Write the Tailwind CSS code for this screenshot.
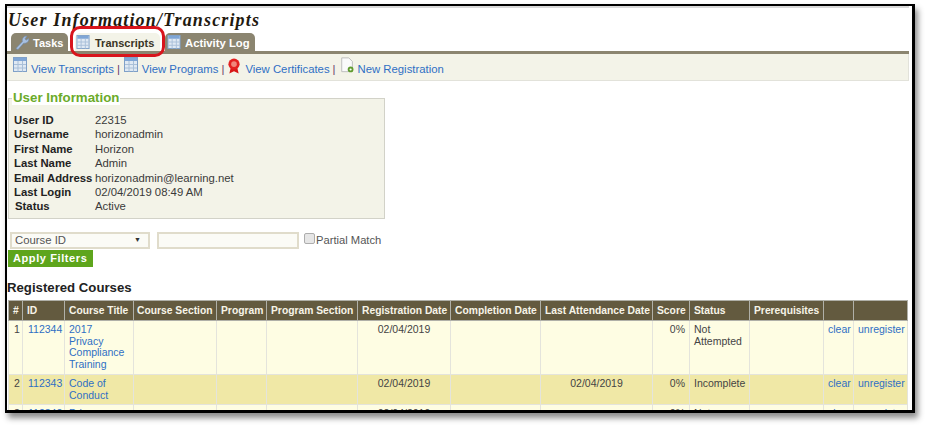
<!DOCTYPE html>
<html>
<head>
<meta charset="utf-8">
<script src="https://cdn.jsdelivr.net/npm/@tailwindcss/browser@4"></script>
</head>
<body class="bg-white">
<svg width="0" height="0" class="absolute">
  <defs>
    <symbol id="tbl" viewBox="0 0 14 15">
      <rect x=".5" y=".5" width="13" height="14" fill="#dfe9f3" stroke="#7fa0c8"/>
      <rect x="1" y="1" width="12" height="3" fill="#7fa6d6"/>
      <path d="M1 7.500h12M1 11h12M5 4v10.500M9.500 4v10.500" stroke="#a9c0d8" stroke-width="1" fill="none"/>
    </symbol>
  </defs>
</svg>
<div class="w-[926px] h-[426px] overflow-hidden pt-[4px] pl-[5px] font-['Liberation_Sans',Arial,sans-serif]">
  <div class="relative w-[910px] h-[409px] border-t-2 border-l-2 border-r-[3px] border-b-[3px] border-black overflow-hidden bg-white shadow-[3px_5px_6px_rgba(0,0,0,0.45)]">
    <div class="h-[2px] bg-[#d9d9d9] mr-[3px]"></div>

    <h1 class="ml-[1px] mt-[2px] h-[22px] leading-[20px] text-[18px] italic font-bold tracking-[1.15px] text-[#1f1a10] font-['Liberation_Serif',serif]">User Information/Transcripts</h1>

    <div class="flex items-end h-[19px] ml-[4px]">
      <div class="flex items-center gap-[3px] h-[18px] w-[57px] pl-[3px] rounded-t-[5px] bg-[#8b8570] text-white text-[11px] font-bold">
        <svg width="16" height="16" viewBox="0 0 15 16"><path d="M1.500 14.500 8 7.500C7.300 5 9 2 12.500 2L10.500 4.800 11.500 6.300 14.200 4.500C14.500 8 11.500 9.800 9.300 9L3.500 15.500Z" fill="#a9c1e0" stroke="#6d8db8" stroke-width=".6"/></svg>
        <span class="pt-[3px]">Tasks</span>
      </div>
      <div class="flex items-center gap-[5px] h-[18px] w-[85px] ml-[7px] pl-[1px] rounded-t-[5px] bg-[#f3f3e8] text-[#3a3526] text-[11px] font-bold">
        <svg width="14" height="14"><use href="#tbl"/></svg>
        <span class="pt-[3px]">Transcripts</span>
      </div>
      <div class="flex items-center gap-[4px] h-[18px] w-[90px] ml-[5px] pl-[2px] rounded-t-[5px] bg-[#8b8570] text-white text-[11.3px] font-bold">
        <svg width="14" height="14"><use href="#tbl"/></svg>
        <span class="pt-[3px]">Activity Log</span>
      </div>
    </div>

    <div class="h-[3px] bg-[#8b8570] mr-[3px]"></div>
    <div class="flex items-center h-[27px] mr-[3px] pl-[6px] bg-[#f3f3e8] border-b border-r border-[#e2e2da] text-[11.33px] text-[#2f6fc4] pt-[4px]">
      <svg width="14" height="15" class="mb-[10px]"><use href="#tbl"/></svg>
      <span class="ml-[4px]">View Transcripts</span>
      <span class="mx-[3px] text-[#6b3d6b]">|</span>
      <svg width="14" height="15" class="mb-[10px] ml-[1px]"><use href="#tbl"/></svg>
      <span class="ml-[4px]">View Programs</span>
      <span class="mx-[3px] text-[#6b3d6b]">|</span>
      <svg width="14" height="18" viewBox="0 0 15 18" class="mb-[6px]"><path d="M4 11 2.500 17 7.500 14.500 12.500 17 11 11Z" fill="#d81818"/><circle cx="7.500" cy="7" r="6" fill="#e32020"/><circle cx="7.500" cy="7" r="3" fill="#f0877c"/></svg>
      <span class="ml-[4px]">View Certificates</span>
      <span class="ml-[3px] mr-[4px] text-[#6b3d6b]">|</span>
      <svg width="15" height="16" viewBox="0 0 16 18" class="mb-[8px]"><path d="M1.500 1h8l4 4v8H9v3.500H1.500Z" fill="#fafafa" stroke="#b8b8b8"/><circle cx="11.500" cy="14" r="3.200" fill="#5f9a2e"/><circle cx="11.500" cy="14" r="1.200" fill="#fff"/></svg>
      <span class="ml-[3px]">New Registration</span>
    </div>

    <fieldset class="relative ml-[1px] mt-[17px] w-[377px] h-[121px] bg-[#f3f3e8] border border-[#d2d2c8]">
      <span class="absolute left-[3px] -top-[9px] px-[1px] text-[13.3px] leading-[15px] font-bold text-[#6bab2a] bg-white">User Information</span>
      <div class="grid grid-cols-[81px_1fr] pt-[14px] pl-[5px] text-[11.33px] leading-[14.4px] text-[#3a3a3a]">
        <b class="text-[#222]">User ID</b><span>22315</span>
        <b class="text-[#222]">Username</b><span>horizonadmin</span>
        <b class="text-[#222]">First Name</b><span>Horizon</span>
        <b class="text-[#222]">Last Name</b><span>Admin</span>
        <b class="text-[#222] whitespace-nowrap">Email Address</b><span>horizonadmin@learning.net</span>
        <b class="text-[#222]">Last Login</b><span>02/04/2019 08:49 AM</span>
        <b class="text-[#222] pl-[1px]">Status</b><span>Active</span>
      </div>
    </fieldset>

    <div class="flex items-center h-[19px] ml-[3px] mt-[12px] text-[#444]">
      <div class="flex items-center justify-between w-[140px] h-[17px] px-[3px] bg-[#fbfbf6] border-2 border-[#e0dccb]">
        <span class="text-[11.33px] text-[#555]">Course ID</span>
        <span class="text-[7px] text-[#333] mr-[4px]">▼</span>
      </div>
      <div class="ml-[7px] w-[142px] h-[17px] bg-[#fbfbf6] border-2 border-[#e0dccb]"></div>
      <div class="ml-[5px] mb-[5px] w-[11px] h-[11px] rounded-[2px] bg-[#e6e6e6] border border-[#adadad]"></div>
      <span class="ml-[1px] text-[11.2px] text-[#555]">Partial Match</span>
    </div>

    <div class="flex items-center ml-[1px] mt-0 w-[85px] h-[17px] pl-[5px] bg-[#5ea51c] text-white text-[11px] font-bold tracking-[0.6px]">Apply Filters</div>

    <h2 class="ml-[0px] mt-[12px] h-[18px] leading-[18px] text-[13.2px] font-bold text-[#222]">Registered Courses</h2>

    <table class="ml-[1px] mt-[3px] table-fixed border-collapse w-[899px] text-[10.5px] leading-[11.5px] text-[#444]">
      <colgroup>
        <col class="w-[14px]"><col class="w-[42px]"><col class="w-[69px]"><col class="w-[83px]"><col class="w-[50px]"><col class="w-[91px]"><col class="w-[93px]"><col class="w-[90px]"><col class="w-[112px]"><col class="w-[37px]"><col class="w-[60px]"><col class="w-[74px]"><col class="w-[30px]"><col class="w-[54px]">
      </colgroup>
      <thead>
        <tr class="h-[20px] bg-[#635a3f] text-[#f7f4e8] text-[10.3px] font-bold whitespace-nowrap text-left">
          <th class="border border-[#b0b0a8] pl-[4px]">#</th>
          <th class="border border-[#b0b0a8] pl-[4px]">ID</th>
          <th class="border border-[#b0b0a8] pl-[4px]">Course Title</th>
          <th class="border border-[#b0b0a8] pl-[3px]">Course Section</th>
          <th class="border border-[#b0b0a8] pl-[4px]">Program</th>
          <th class="border border-[#b0b0a8] pl-[4px]">Program Section</th>
          <th class="border border-[#b0b0a8] pl-[4px]">Registration Date</th>
          <th class="border border-[#b0b0a8] pl-[4px]">Completion Date</th>
          <th class="border border-[#b0b0a8] pl-[4px]">Last Attendance Date</th>
          <th class="border border-[#b0b0a8] pl-[4px]">Score</th>
          <th class="border border-[#b0b0a8] pl-[4px]">Status</th>
          <th class="border border-[#b0b0a8] pl-[4px]">Prerequisites</th>
          <th class="border border-[#b0b0a8]"></th>
          <th class="border border-[#b0b0a8]"></th>
        </tr>
      </thead>
      <tbody>
        <tr class="h-[54px] bg-[#fefde3] align-top">
          <td class="border border-[#e4e4dc] pl-[5px] pt-[3px]">1</td>
          <td class="border border-[#e4e4dc] pl-[5px] pt-[3px] text-[#2f6fc4]">112344</td>
          <td class="border border-[#e4e4dc] pl-[4px] pt-[3px] text-[#2f6fc4]">2017<br>Privacy Compliance Training</td>
          <td class="border border-[#e4e4dc]"></td>
          <td class="border border-[#e4e4dc]"></td>
          <td class="border border-[#e4e4dc]"></td>
          <td class="border border-[#e4e4dc] pt-[3px] text-center">02/04/2019</td>
          <td class="border border-[#e4e4dc]"></td>
          <td class="border border-[#e4e4dc]"></td>
          <td class="border border-[#e4e4dc] pt-[3px] pr-[4px] text-right">0%</td>
          <td class="border border-[#e4e4dc] pl-[4px] pt-[3px]">Not Attempted</td>
          <td class="border border-[#e4e4dc]"></td>
          <td class="border border-[#e4e4dc] pl-[4px] pt-[3px] text-[#2f6fc4]">clear</td>
          <td class="border border-[#e4e4dc] pl-[4px] pt-[3px] text-[#2f6fc4]">unregister</td>
        </tr>
        <tr class="h-[30px] bg-[#f0e8a6] align-top">
          <td class="border border-[#e4e4dc] pl-[5px] pt-[3px]">2</td>
          <td class="border border-[#e4e4dc] pl-[5px] pt-[3px] text-[#2f6fc4]">112343</td>
          <td class="border border-[#e4e4dc] pl-[4px] pt-[3px] text-[#2f6fc4]">Code of Conduct</td>
          <td class="border border-[#e4e4dc]"></td>
          <td class="border border-[#e4e4dc]"></td>
          <td class="border border-[#e4e4dc]"></td>
          <td class="border border-[#e4e4dc] pt-[3px] text-center">02/04/2019</td>
          <td class="border border-[#e4e4dc]"></td>
          <td class="border border-[#e4e4dc] pt-[3px] text-center">02/04/2019</td>
          <td class="border border-[#e4e4dc] pt-[3px] pr-[4px] text-right">0%</td>
          <td class="border border-[#e4e4dc] pl-[4px] pt-[3px]">Incomplete</td>
          <td class="border border-[#e4e4dc]"></td>
          <td class="border border-[#e4e4dc] pl-[4px] pt-[3px] text-[#2f6fc4]">clear</td>
          <td class="border border-[#e4e4dc] pl-[4px] pt-[3px] text-[#2f6fc4]">unregister</td>
        </tr>
        <tr class="h-[31px] bg-[#fefde3] align-top">
          <td class="border border-[#e4e4dc] pl-[5px] pt-[3px]">3</td>
          <td class="border border-[#e4e4dc] pl-[5px] pt-[3px] text-[#2f6fc4]">112342</td>
          <td class="border border-[#e4e4dc] pl-[4px] pt-[3px] text-[#2f6fc4]">Privacy</td>
          <td class="border border-[#e4e4dc]"></td>
          <td class="border border-[#e4e4dc]"></td>
          <td class="border border-[#e4e4dc]"></td>
          <td class="border border-[#e4e4dc] pt-[3px] text-center">02/04/2019</td>
          <td class="border border-[#e4e4dc]"></td>
          <td class="border border-[#e4e4dc]"></td>
          <td class="border border-[#e4e4dc] pt-[3px] pr-[4px] text-right">0%</td>
          <td class="border border-[#e4e4dc] pl-[4px] pt-[3px]">Not</td>
          <td class="border border-[#e4e4dc]"></td>
          <td class="border border-[#e4e4dc] pl-[4px] pt-[3px] text-[#2f6fc4]">clear</td>
          <td class="border border-[#e4e4dc] pl-[4px] pt-[3px] text-[#2f6fc4]">unregister</td>
        </tr>
      </tbody>
    </table>

    <div class="absolute left-[63px] top-[20px] w-[95px] h-[31px] rounded-[10px] border-[3px] border-[#d8141c]"></div>
  </div>
</div>
</body>
</html>
